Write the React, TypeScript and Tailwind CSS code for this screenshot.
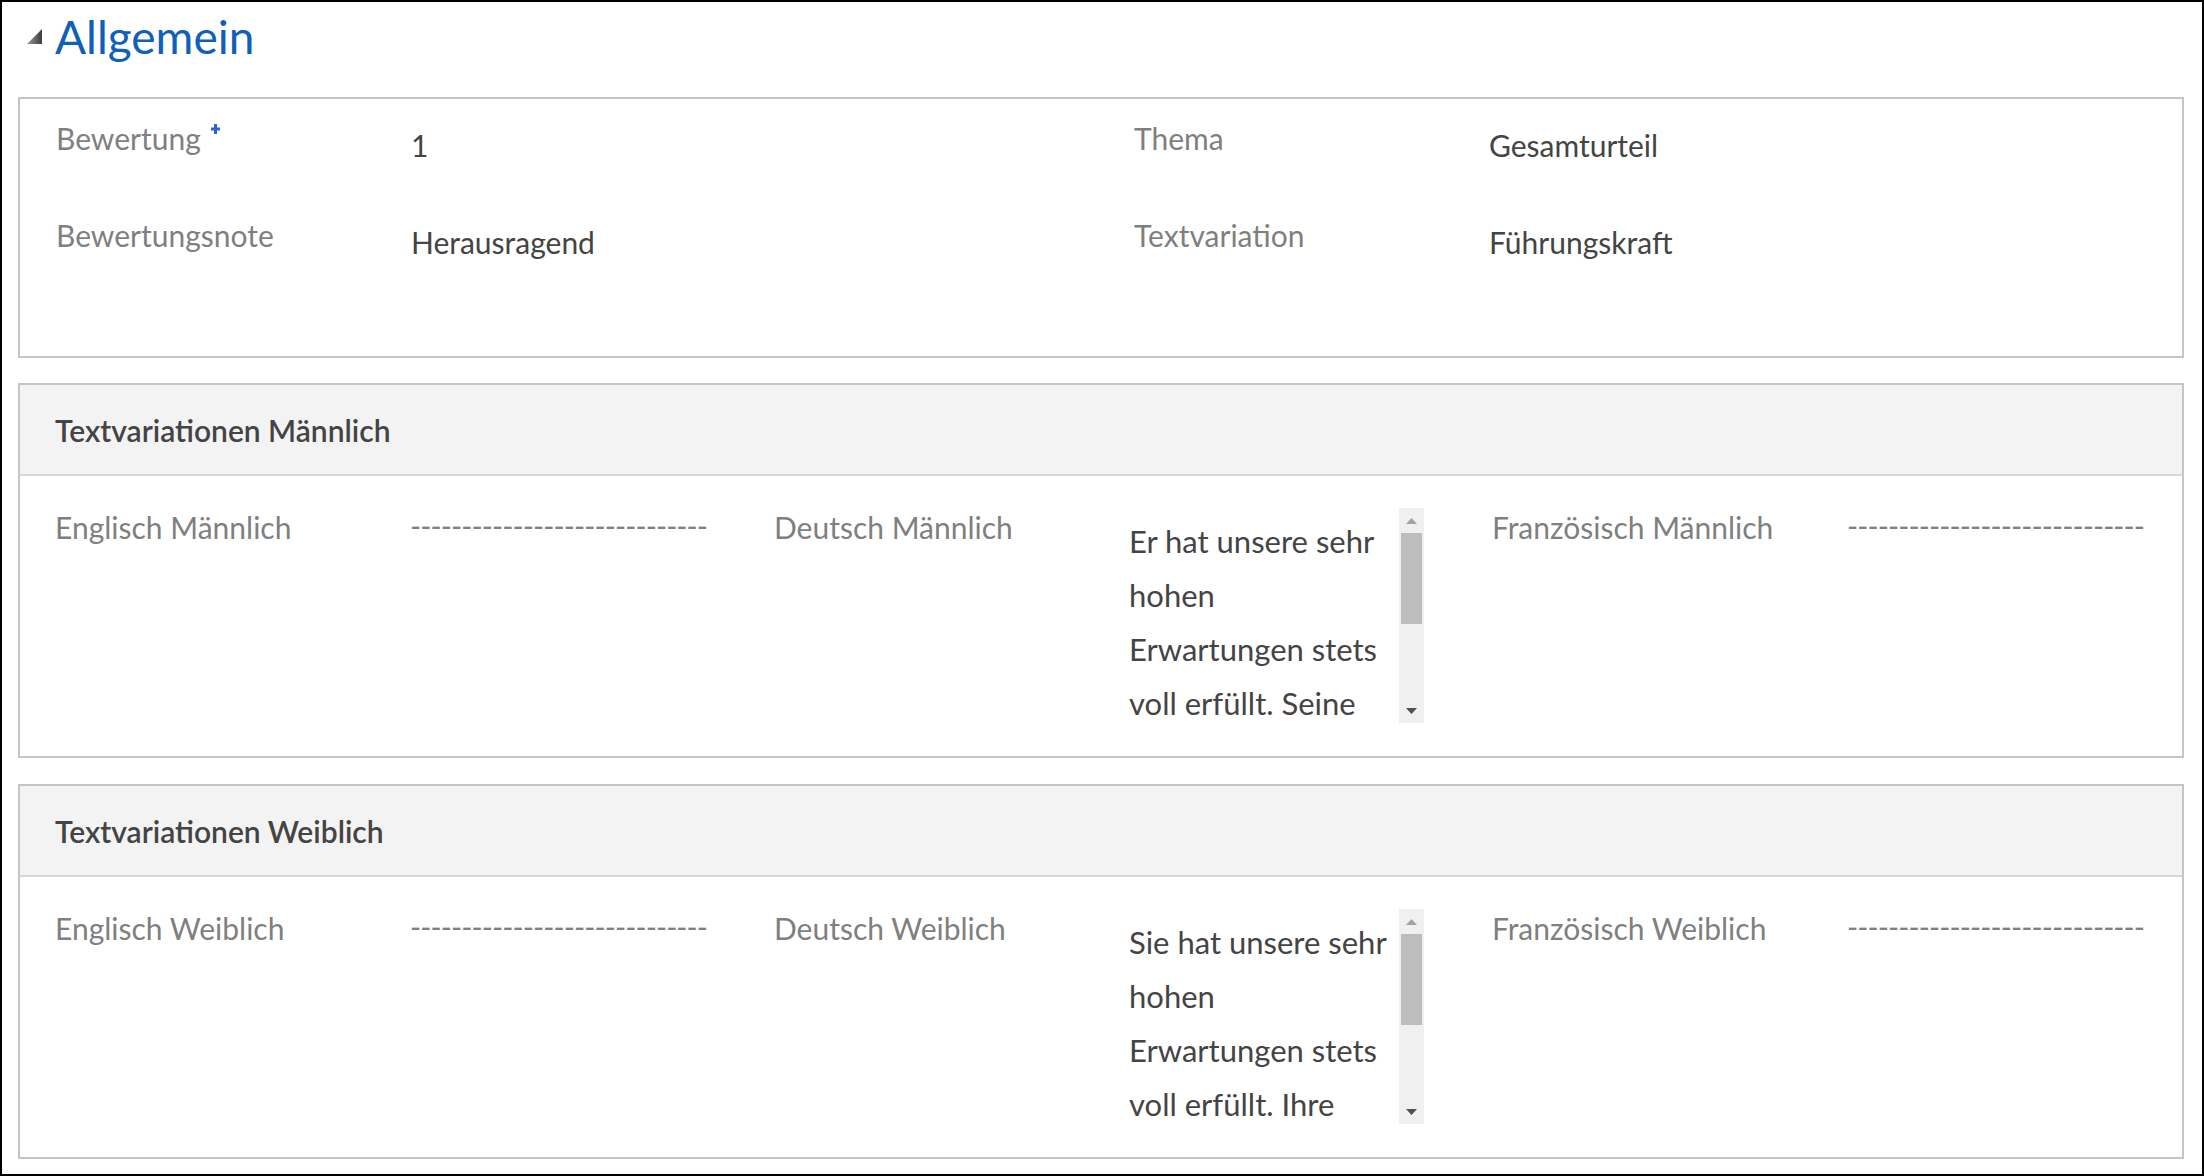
import React from "react";

const font = { fontFamily: "Lato, 'Liberation Sans', sans-serif" };

function Triangle() {
  return (
    <svg width="15" height="15" viewBox="0 0 15 15" className="mt-[15px] shrink-0">
      <defs>
        <linearGradient id="tri" x1="0" y1="0" x2="1" y2="0">
          <stop offset="0" stopColor="#9a9a9a" />
          <stop offset="1" stopColor="#3c3c3c" />
        </linearGradient>
      </defs>
      <polygon points="15,0 15,15 0,15" fill="url(#tri)" />
    </svg>
  );
}

function Required() {
  return (
    <svg width="11" height="12" viewBox="0 0 11 12" className="ml-[9px] mt-[3px] shrink-0">
      <path d="M5.5 1v10M1 6h9" stroke="#2c63d0" strokeWidth="3" />
    </svg>
  );
}

function Dashes() {
  return (
    <div className="text-[30px] leading-[36px] text-[#808080] tracking-[-0.9px] whitespace-nowrap -mt-[2px]">
      -----------------------------
    </div>
  );
}

function Scrollbar() {
  return (
    <div className="w-[25px] h-[215px] bg-[#f0f0f0] flex flex-col shrink-0">
      <div className="h-[25px] flex items-center justify-center">
        <svg width="11" height="6" viewBox="0 0 11 6">
          <polygon points="5.5,0 11,6 0,6" fill="#a3a3a3" />
        </svg>
      </div>
      <div className="h-[91px] ml-[2px] mr-[2px] bg-[#bdbdbd]" />
      <div className="flex-1" />
      <div className="h-[25px] flex items-center justify-center">
        <svg width="11" height="6" viewBox="0 0 11 6">
          <polygon points="0,0 11,0 5.5,6" fill="#505050" />
        </svg>
      </div>
    </div>
  );
}

function TextArea({ text }: { text: string }) {
  return (
    <div className="flex -mt-[1px]">
      <div className="w-[262px] mr-[8px] h-[215px] overflow-hidden pt-[6px] text-[31px] leading-[54px] text-[#444444]">
        {text}
      </div>
      <Scrollbar />
    </div>
  );
}

function Field({
  label,
  children,
  required,
}: {
  label: string;
  children: React.ReactNode;
  required?: boolean;
}) {
  return (
    <div className="flex items-start">
      <div className="w-[355px] shrink-0 flex items-start text-[30px] leading-[36px] text-[#7f7f7f]">
        <span>{label}</span>
        {required && <Required />}
      </div>
      <div className="flex-1">{children}</div>
    </div>
  );
}

function Value({ children }: { children: React.ReactNode }) {
  return <div className="mt-[7px] text-[30px] leading-[36px] text-[#444444]">{children}</div>;
}

function Section({
  title,
  gender,
  text,
}: {
  title: string;
  gender: string;
  text: string;
}) {
  return (
    <div className="ml-[16px] mr-[18px] h-[375px] border-2 border-[#c1c6c9] flex flex-col">
      <div className="h-[91px] shrink-0 bg-[#f3f3f3] border-b-2 border-[#d6d8d9] flex items-center pl-[35px]">
        <h3 className="text-[30px] leading-[36px] font-semibold text-[#444444]">{title}</h3>
      </div>
      <div className="grid grid-cols-[719px_718px_1fr] pl-[35px] pt-[33px]">
        <Field label={`Englisch ${gender}`}>
          <Dashes />
        </Field>
        <Field label={`Deutsch ${gender}`}>
          <TextArea text={text} />
        </Field>
        <Field label={`Französisch ${gender}`}>
          <Dashes />
        </Field>
      </div>
    </div>
  );
}

export default function App() {
  return (
    <div
      className="w-[2204px] h-[1176px] border-2 border-black bg-white overflow-hidden"
      style={font}
    >
      <div className="h-[95px] flex items-start pl-[25px] pt-[12px]">
        <Triangle />
        <h2 className="ml-[13px] text-[46px] leading-[46px] text-[#1160b7]">Allgemein</h2>
      </div>

      <div className="ml-[16px] mr-[18px] h-[261px] border-2 border-[#c1c6c9] pt-[21px] pl-[36px]">
        <div className="grid grid-cols-[1078px_1fr] auto-rows-[97px]">
          <Field label="Bewertung" required>
            <Value>1</Value>
          </Field>
          <Field label="Thema">
            <Value>Gesamturteil</Value>
          </Field>
          <Field label="Bewertungsnote">
            <Value>Herausragend</Value>
          </Field>
          <Field label="Textvariation">
            <Value>Führungskraft</Value>
          </Field>
        </div>
      </div>

      <div className="h-[25px]" />
      <Section
        title="Textvariationen Männlich"
        gender="Männlich"
        text="Er hat unsere sehr hohen Erwartungen stets voll erfüllt. Seine Leistungen waren jederzeit hervorragend."
      />
      <div className="h-[26px]" />
      <Section
        title="Textvariationen Weiblich"
        gender="Weiblich"
        text="Sie hat unsere sehr hohen Erwartungen stets voll erfüllt. Ihre Leistungen waren jederzeit hervorragend."
      />
    </div>
  );
}
